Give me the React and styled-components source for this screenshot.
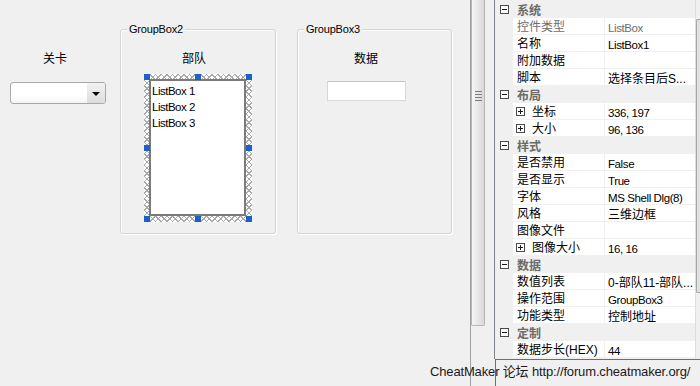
import React from "react";
import styled, { createGlobalStyle } from "styled-components";

const GlobalStyle = createGlobalStyle`
  html, body {
    margin: 0;
    padding: 0;
    background: #f0f0f0;
  }
  body {
    font-family: "Liberation Sans", "Noto Sans CJK SC", sans-serif;
  }
`;

const Window = styled.div`
  position: relative;
  display: flex;
  width: 700px;
  height: 386px;
  overflow: hidden;
  background: #f0f0f0;
  color: #000;
  font-family: "Liberation Sans", "Noto Sans CJK SC", sans-serif;
`;

/* ---------- designer canvas ---------- */

const Designer = styled.div`
  position: relative;
  flex: none;
  width: 470px;
  height: 100%;
`;

const Caption = styled.div`
  position: absolute;
  left: ${p => p.$x}px;
  top: ${p => p.$y}px;
  font-size: 12px;
  line-height: 16px;
  white-space: nowrap;
`;

const Combo = styled.div`
  position: absolute;
  left: 10px;
  top: 82px;
  width: 96px;
  height: 22px;
  box-sizing: border-box;
  display: flex;
  justify-content: flex-end;
  border: 1px solid #a8a8a8;
  border-radius: 3px;
  background: linear-gradient(#ffffff 60%, #f4f4f4);
  overflow: hidden;
`;

const ComboButton = styled.div`
  width: 18px;
  display: flex;
  align-items: center;
  justify-content: center;
  background: linear-gradient(#f2f2f2, #dddddd);
`;

const Arrow = styled.span`
  width: 0;
  height: 0;
  border-left: 4px solid transparent;
  border-right: 4px solid transparent;
  border-top: 4px solid #000;
  margin-top: 1px;
`;

const GroupFrame = styled.div`
  position: absolute;
  left: ${p => p.$x}px;
  top: ${p => p.$y}px;
  width: ${p => p.$w}px;
  height: ${p => p.$h}px;
  box-sizing: border-box;
  border: 1px solid #d5d5d5;
  border-radius: 3px;
  box-shadow: inset 1px 1px 0 #ffffff, 1px 1px 0 #ffffff;
`;

const Legend = styled.span`
  position: absolute;
  left: 6px;
  top: -8px;
  padding: 0 2px;
  background: #f0f0f0;
  font-size: 11px;
  line-height: 14px;
  letter-spacing: -0.2px;
  white-space: nowrap;
`;

const Selection = styled.div`
  position: absolute;
  left: ${p => p.$x}px;
  top: ${p => p.$y}px;
  width: 108px;
  height: 148px;
  box-sizing: border-box;
  padding: 5px 6px 6px 5px;
  background-color: #ffffff;
  background-image:
    repeating-linear-gradient(45deg, #a9a9a9 0 1px, transparent 1px 4px),
    repeating-linear-gradient(-45deg, #a9a9a9 0 1px, transparent 1px 4px);
`;

const ListBox = styled.div`
  width: 100%;
  height: 100%;
  box-sizing: border-box;
  border: 2px solid #7b7b7b;
  background: #ffffff;
  padding: 2px 1px;
`;

const ListItem = styled.div`
  font-size: 11.5px;
  line-height: 16px;
  letter-spacing: -0.5px;
  white-space: nowrap;
`;

const Handle = styled.span`
  position: absolute;
  left: ${p => p.$x}px;
  top: ${p => p.$y}px;
  width: 6px;
  height: 6px;
  background: #1c62c6;
`;

const TextBox = styled.div`
  position: absolute;
  left: ${p => p.$x}px;
  top: ${p => p.$y}px;
  width: 79px;
  height: 20px;
  box-sizing: border-box;
  border: 1px solid #d8d8d8;
  border-top-color: #c6c6c6;
  background: #ffffff;
`;

/* ---------- splitter ---------- */

const Splitter = styled.div`
  flex: none;
  width: 14px;
  height: 100%;
  border-left: 1px solid #a0a0a0;
  margin-right: 9px;
`;

const SplitterThumb = styled.div`
  height: 326px;
  box-sizing: border-box;
  display: flex;
  justify-content: center;
  padding-top: 90px;
  border: 1px solid #b6b6b6;
  border-top: none;
  border-radius: 0 0 2px 2px;
  background: linear-gradient(to right, #f6f6f6, #e7e7e7 50%, #d9d9d9);
`;

/* ---------- property inspector ---------- */

const Inspector = styled.div`
  flex: 1;
  min-width: 0;
  display: flex;
  flex-direction: column;
`;

const GridArea = styled.div`
  flex: none;
  display: flex;
  height: 359px;
  border-left: 1px solid #7d8288;
`;

const Rows = styled.div`
  flex: 1;
  min-width: 0;
  display: flex;
  flex-direction: column;
  padding-top: 1px;
`;

const Row = styled.div`
  flex: none;
  display: flex;
  height: 16px;
  border-bottom: 1px solid #f0f0f0;
  font-size: 12px;
  line-height: 16px;
  white-space: nowrap;
`;

const Gutter = styled.div`
  flex: none;
  width: 18px;
  display: flex;
  align-items: center;
  justify-content: center;
  background: #f0f0f0;
`;

const CategoryLabel = styled.div`
  flex: 1;
  box-sizing: border-box;
  padding: 2px 0 0 4px;
  background: #f0f0f0;
  color: #6a6a6a;
  font-weight: bold;
  overflow: hidden;
`;

const NameCell = styled.div`
  flex: none;
  width: 92px;
  box-sizing: border-box;
  display: flex;
  align-items: center;
  gap: 7px;
  padding-left: ${p => (p.$nested ? 3 : 4)}px;
  border-right: 1px solid #f0f0f0;
  background: #ffffff;
  color: ${p => (p.$dim ? "#6d6d6d" : "#000")};
  overflow: hidden;

  span {
    padding-top: 2px;
  }
`;

const ValueCell = styled.div`
  flex: 1;
  min-width: 0;
  box-sizing: border-box;
  padding: 2px 0 0 3px;
  background: #ffffff;
  color: ${p => (p.$dim ? "#6d6d6d" : "#000")};
  overflow: hidden;
  font-size: ${p => (p.$latin ? "11.5px" : "12px")};
  letter-spacing: ${p => (p.$latin ? "-0.4px" : "0")};
`;

const ScrollTrack = styled.div`
  flex: none;
  width: 4px;
  display: flex;
  flex-direction: column;
  border-left: 1px solid #dedede;
  background: #f0f0f0;
`;

const ScrollThumb = styled.div`
  margin-top: 19px;
  height: 274px;
  box-sizing: border-box;
  border: 1px solid #a6a6a6;
  border-right: none;
  border-radius: 2px 0 0 2px;
  background: #e2e2e2;
`;

const HelpBox = styled.div`
  flex: 1;
  margin-left: 1px;
  border-top: 1px solid #6e6e6e;
  border-left: 1px solid #6e6e6e;
`;

const Watermark = styled.div`
  position: absolute;
  left: 430px;
  top: 364px;
  font-size: 13px;
  line-height: 16px;
  letter-spacing: -0.15px;
  color: #1a1a1a;
  white-space: nowrap;
  pointer-events: none;
`;

const ToggleBox = ({ open }) => (
  <svg width="9" height="9" viewBox="0 0 9 9">
    <rect x="0.5" y="0.5" width="8" height="8" fill="#fff" stroke="#4a4a4a" />
    <line x1="2" y1="4.5" x2="7" y2="4.5" stroke="#1a1a1a" />
    {!open && <line x1="4.5" y1="2" x2="4.5" y2="7" stroke="#1a1a1a" />}
  </svg>
);

const Grip = () => (
  <svg width="7" height="13" viewBox="0 0 7 13">
    {[1, 4, 7, 10].map(y => (
      <line key={y} x1="0" y1={y + 0.5} x2="7" y2={y + 0.5} stroke="#7c7c7c" />
    ))}
  </svg>
);

const properties = [
  {
    category: "系统",
    items: [
      { name: "控件类型", value: "ListBox", dim: true, latin: true },
      { name: "名称", value: "ListBox1", latin: true },
      { name: "附加数据", value: "" },
      { name: "脚本", value: "选择条目后S..." },
    ],
  },
  {
    category: "布局",
    items: [
      { name: "坐标", value: "336, 197", nested: true, latin: true },
      { name: "大小", value: "96, 136", nested: true, latin: true },
    ],
  },
  {
    category: "样式",
    items: [
      { name: "是否禁用", value: "False", latin: true },
      { name: "是否显示", value: "True", latin: true },
      { name: "字体", value: "MS Shell Dlg(8)", latin: true },
      { name: "风格", value: "三维边框" },
      { name: "图像文件", value: "" },
      { name: "图像大小", value: "16, 16", nested: true, latin: true },
    ],
  },
  {
    category: "数据",
    items: [
      { name: "数值列表", value: "0-部队11-部队..." },
      { name: "操作范围", value: "GroupBox3", latin: true },
      { name: "功能类型", value: "控制地址" },
    ],
  },
  {
    category: "定制",
    items: [{ name: "数据步长(HEX)", value: "44", latin: true }],
  },
];

const handleSpots = [
  [0, 0], [51, 0], [102, 0],
  [0, 71], [102, 71],
  [0, 142], [51, 142], [102, 142],
];

const App = () => {
  return (
    <Window>
      <GlobalStyle />

      <Designer>
        <Caption $x={43} $y={51}>关卡</Caption>
        <Combo>
          <ComboButton>
            <Arrow />
          </ComboButton>
        </Combo>

        <GroupFrame $x={120} $y={29} $w={156} $h={205}>
          <Legend>GroupBox2</Legend>
          <Caption $x={61} $y={21}>部队</Caption>
          <Selection $x={23} $y={44}>
            <ListBox>
              <ListItem>ListBox 1</ListItem>
              <ListItem>ListBox 2</ListItem>
              <ListItem>ListBox 3</ListItem>
            </ListBox>
            {handleSpots.map(([x, y]) => (
              <Handle key={`${x}-${y}`} $x={x} $y={y} />
            ))}
          </Selection>
        </GroupFrame>

        <GroupFrame $x={297} $y={29} $w={155} $h={205}>
          <Legend>GroupBox3</Legend>
          <Caption $x={56} $y={21}>数据</Caption>
          <TextBox $x={29} $y={51} />
        </GroupFrame>
      </Designer>

      <Splitter>
        <SplitterThumb>
          <Grip />
        </SplitterThumb>
      </Splitter>

      <Inspector>
        <GridArea>
          <Rows>
            {properties.map(group => (
              <React.Fragment key={group.category}>
                <Row>
                  <Gutter>
                    <ToggleBox open />
                  </Gutter>
                  <CategoryLabel>{group.category}</CategoryLabel>
                </Row>
                {group.items.map(item => (
                  <Row key={item.name}>
                    <Gutter />
                    <NameCell $dim={item.dim} $nested={item.nested}>
                      {item.nested && <ToggleBox />}
                      <span>{item.name}</span>
                    </NameCell>
                    <ValueCell $dim={item.dim} $latin={item.latin}>
                      {item.value}
                    </ValueCell>
                  </Row>
                ))}
              </React.Fragment>
            ))}
          </Rows>
          <ScrollTrack>
            <ScrollThumb />
          </ScrollTrack>
        </GridArea>
        <HelpBox />
      </Inspector>

      <Watermark>CheatMaker 论坛 http://forum.cheatmaker.org/</Watermark>
    </Window>
  );
};

export default App;
